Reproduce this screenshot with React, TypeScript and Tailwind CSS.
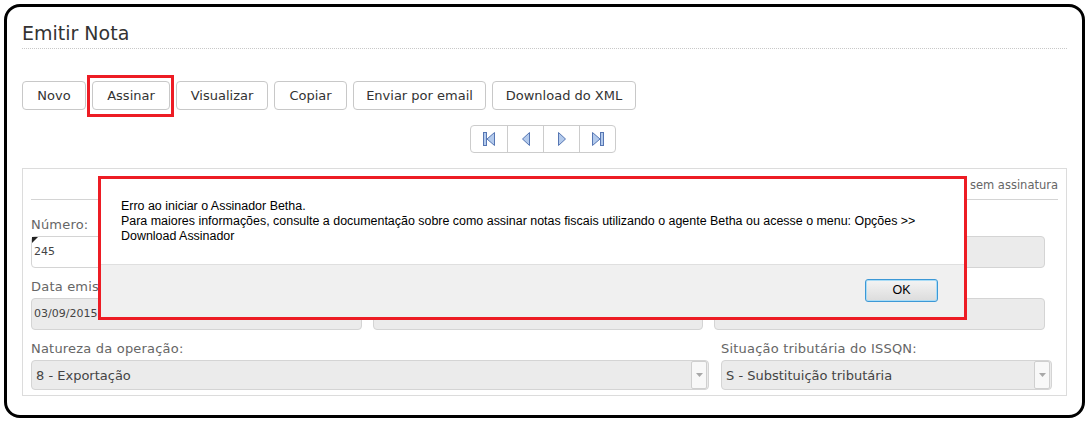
import React from "react";

const toolbar = [
  { label: "Novo", w: "w-[64px]" },
  { label: "Assinar", w: "w-[78px]" },
  { label: "Visualizar", w: "w-[92px]" },
  { label: "Copiar", w: "w-[73px]" },
  { label: "Enviar por email", w: "w-[133px]" },
  { label: "Download do XML", w: "w-[144px]" },
];

function PagerIcon({ kind }: { kind: "first" | "prev" | "next" | "last" }) {
  const stroke = "#5676b3";
  const fill = "#b3caec";
  return (
    <svg width="14" height="14" viewBox="0 0 14 14">
      {kind === "first" && (
        <>
          <rect x="1.5" y="0.5" width="3" height="13" fill={fill} stroke={stroke} />
          <path d="M12.5 0.5 L5 7 L12.5 13.5 Z" fill={fill} stroke={stroke} strokeLinejoin="round" />
        </>
      )}
      {kind === "prev" && (
        <path d="M10.5 0.5 L3.5 7 L10.5 13.5 Z" fill={fill} stroke={stroke} strokeLinejoin="round" />
      )}
      {kind === "next" && (
        <path d="M3.5 0.5 L10.5 7 L3.5 13.5 Z" fill={fill} stroke={stroke} strokeLinejoin="round" />
      )}
      {kind === "last" && (
        <>
          <path d="M1.5 0.5 L9 7 L1.5 13.5 Z" fill={fill} stroke={stroke} strokeLinejoin="round" />
          <rect x="9.5" y="0.5" width="3" height="13" fill={fill} stroke={stroke} />
        </>
      )}
    </svg>
  );
}

function Field({ label, value, white, marker }: { label?: string; value?: string; white?: boolean; marker?: boolean }) {
  return (
    <div className="flex flex-col">
      <div className="h-[16px] text-[13px] leading-[16px] text-[#666] tracking-[0.2px]">{label}</div>
      <div
        className={`relative mt-[3px] h-[32px] rounded-[4px] border border-[#d4d4d4] pl-[2px] flex items-center text-[11px] text-[#444] ${
          white ? "bg-white" : "bg-[#ebebeb]"
        }`}
      >
        {marker && (
          <svg className="absolute left-0 top-0" width="6" height="6" viewBox="0 0 6 6">
            <path d="M0 0 L6 0 L0 6 Z" fill="#222" />
          </svg>
        )}
        {value}
      </div>
    </div>
  );
}

function Select({ label, value, w }: { label: string; value: string; w: string }) {
  return (
    <div className={`flex flex-col ${w}`}>
      <div className="h-[16px] text-[13px] leading-[16px] text-[#666] tracking-[0.2px]">{label}</div>
      <div className="mt-[3px] h-[30px] rounded-[4px] border border-[#d4d4d4] bg-[#ebebeb] flex items-center pl-[4px] pr-[1px] text-[13px] text-[#444]">
        <span className="flex-1 pt-[2px]">{value}</span>
        <div className="h-[28px] w-[16px] rounded-[2px] border border-[#cfcfcf] bg-[#f8f8f8] flex items-center justify-center">
          <svg width="7" height="4" viewBox="0 0 7 4">
            <path d="M0 0 L7 0 L3.5 4 Z" fill="#a8a8a8" />
          </svg>
        </div>
      </div>
    </div>
  );
}

export default function App() {
  return (
    <div className="relative w-[1089px] h-[424px] bg-white overflow-hidden font-['DejaVu_Sans',sans-serif]">
      <div className="ml-[4px] mt-[4px] w-[1081px] h-[414px] rounded-[16px] border-[3px] border-black px-[15px] pt-[14px]">
        <div className="h-[28px] border-b border-dotted border-[#c8c8c8] text-[19px] leading-[24px] text-[#333]">
          Emitir Nota
        </div>

        <div className="mt-[32px] flex gap-[6px]">
          {toolbar.map((b) => (
            <button
              key={b.label}
              className={`${b.w} h-[29px] rounded-[4px] border border-[#c8c8c8] bg-white text-[13px] text-[#333]`}
            >
              {b.label}
            </button>
          ))}
        </div>

        <div className="mt-[15px] flex justify-center pr-[3px]">
          <div className="flex h-[28px] rounded-[4px] border border-[#cccccc] bg-white">
            {(["first", "prev", "next", "last"] as const).map((k, i) => (
              <div
                key={k}
                className={`w-[36px] flex items-center justify-center ${i > 0 ? "border-l border-[#cccccc]" : ""}`}
              >
                <PagerIcon kind={k} />
              </div>
            ))}
          </div>
        </div>

        <div className="mt-[15px] h-[228px] border border-[#dcdcdc] px-[8px] pt-[8px]">
          <div className="h-[23px] border-b border-[#d4d4d4] text-right text-[11.5px] leading-[16px] text-[#666]">
            sem assinatura
          </div>

          <div className="mt-[17px] w-[1014px] grid grid-cols-3 gap-x-[11px] gap-y-[11px]">
            <Field label="Número:" value="245" white marker />
            <Field />
            <Field />
            <Field label="Data emissão:" value="03/09/2015" />
            <Field />
            <Field />
          </div>

          <div className="mt-[11px] flex gap-[12px]">
            <Select label="Natureza da operação:" value="8 - Exportação" w="w-[678px]" />
            <Select label="Situação tributária do ISSQN:" value="S - Substituição tributária" w="w-[331px]" />
          </div>
        </div>
      </div>

      {/* destaque do botão Assinar */}
      <div className="absolute left-[87px] top-[75px] w-[87px] h-[42px] border-[3px] border-[#ed1c24]" />

      {/* diálogo de erro */}
      <div className="absolute left-[98px] top-[176px] w-[869px] h-[144px] border-[3px] border-[#ed1c24] flex flex-col font-['Liberation_Sans',Arial,sans-serif] text-[12.45px] text-black">
        <div className="h-[86px] bg-white border-b border-[#dfdfdf] pl-[20px] pt-[20px] leading-[15px] whitespace-nowrap">
          Erro ao iniciar o Assinador Betha.
          <br />
          Para maiores informações, consulte a documentação sobre como assinar notas fiscais utilizando o agente Betha ou acesse o menu: Opções &gt;&gt;
          <br />
          Download Assinador
        </div>
        <div className="flex-1 bg-[#f0f0f0] flex justify-end items-start pt-[14px] pr-[26px]">
          <button className="w-[73px] h-[23px] rounded-[3px] border border-[#3c98d6] bg-gradient-to-b from-[#f4f4f4] to-[#dcdcdc] shadow-[inset_0_0_0_1px_#a9dcf6] text-[12.5px] text-black">
            OK
          </button>
        </div>
      </div>
    </div>
  );
}
